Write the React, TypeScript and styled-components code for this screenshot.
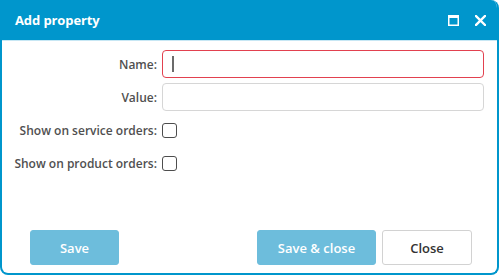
import React from "react";
import styled, { createGlobalStyle } from "styled-components";

const Global = createGlobalStyle`
  html, body { margin: 0; padding: 0; background: #ffffff; }
  body { font-family: "Open Sans", "Liberation Sans", sans-serif; }
  * { box-sizing: border-box; }
`;

const Window = styled.div`
  width: 499px;
  height: 275px;
  display: flex;
  flex-direction: column;
  background: #ffffff;
  border-radius: 0 8px 8px 8px;
  overflow: hidden;
  border: 2px solid #0096cc;
  border-top: none;
`;

const Header = styled.div`
  height: 41px;
  margin: 0 -2px;
  padding: 0 13px 0 15px;
  display: flex;
  align-items: center;
  background: #0096cc;
  border-bottom: 1px solid #c7e7f4;
  color: #ffffff;
`;

const Title = styled.div`
  flex: 1;
  font-size: 13px;
  font-weight: 700;
  letter-spacing: -0.1px;
  padding-bottom: 1px;
`;

const Tools = styled.div`
  display: flex;
  align-items: center;
  gap: 16px;
`;

const ToolButton = styled.span`
  display: flex;
  width: 11px;
  height: 11px;
  color: #ffffff;
`;

const Body = styled.div`
  flex: 1;
  display: flex;
  flex-direction: column;
`;

const Form = styled.div`
  flex: 1;
  display: grid;
  grid-template-columns: 155px 1fr;
  grid-auto-rows: 28px;
  column-gap: 5px;
  row-gap: 5px;
  padding: 9px 13px 0 0;
  align-content: start;
`;

const Label = styled.label`
  display: flex;
  align-items: center;
  justify-content: flex-end;
  font-size: 12px;
  font-weight: 600;
  color: #505050;
  white-space: nowrap;
`;

const Field = styled.div<{ $invalid?: boolean }>`
  position: relative;
  border: 1px solid ${(p) => (p.$invalid ? "#e2414f" : "#d6d6d6")};
  border-radius: 4px;
  background: #ffffff;
  ${(p) =>
    p.$invalid
      ? `&::before {
    content: "";
    position: absolute;
    left: 9px;
    top: 5px;
    width: 2px;
    height: 16px;
    background: #6b6b6b;
  }`
      : ""}
`;

const Cell = styled.div`
  display: flex;
  align-items: center;
`;

const Check = styled.span`
  width: 15px;
  height: 15px;
  border: 1px solid #4d4d4d;
  border-radius: 3px;
  background: #ffffff;
`;

const Footer = styled.div`
  display: flex;
  align-items: center;
  padding: 0 25px 8px 28px;
`;

const Spacer = styled.div`
  flex: 1;
`;

const Button = styled.button<{ $w: number; $variant: "primary" | "plain" }>`
  width: ${(p) => p.$w}px;
  height: 35px;
  border-radius: 3px;
  font-family: "Open Sans", "Liberation Sans", sans-serif;
  font-size: 13px;
  font-weight: 600;
  cursor: pointer;
  border: 1px solid ${(p) => (p.$variant === "primary" ? "#6dbddc" : "#d2d2d2")};
  background: ${(p) => (p.$variant === "primary" ? "#6dbddc" : "#ffffff")};
  color: ${(p) => (p.$variant === "primary" ? "#ffffff" : "#333333")};
  & + & {
    margin-left: 6px;
  }
`;

export default function App() {
  return (
    <>
      <Global />
      <Window>
        <Header>
          <Title>Add property</Title>
          <Tools>
            <ToolButton>
              <svg width="11" height="11" viewBox="0 0 11 11">
                <rect x="0.75" y="0.75" width="9.5" height="9.5" fill="none" stroke="#fff" strokeWidth="1.5" />
                <rect x="0" y="0" width="11" height="3" fill="#fff" />
              </svg>
            </ToolButton>
            <ToolButton>
              <svg width="11" height="11" viewBox="0 0 11 11">
                <path d="M1 1 L10 10 M10 1 L1 10" stroke="#fff" strokeWidth="2.4" strokeLinecap="square" />
              </svg>
            </ToolButton>
          </Tools>
        </Header>
        <Body>
          <Form>
            <Label>Name:</Label>
            <Field $invalid />
            <Label>Value:</Label>
            <Field />
            <Label>Show on service orders:</Label>
            <Cell>
              <Check />
            </Cell>
            <Label>Show on product orders:</Label>
            <Cell>
              <Check />
            </Cell>
          </Form>
          <Footer>
            <Button $w={89} $variant="primary">Save</Button>
            <Spacer />
            <Button $w={119} $variant="primary">Save &amp; close</Button>
            <Button $w={90} $variant="plain">Close</Button>
          </Footer>
        </Body>
      </Window>
    </>
  );
}
